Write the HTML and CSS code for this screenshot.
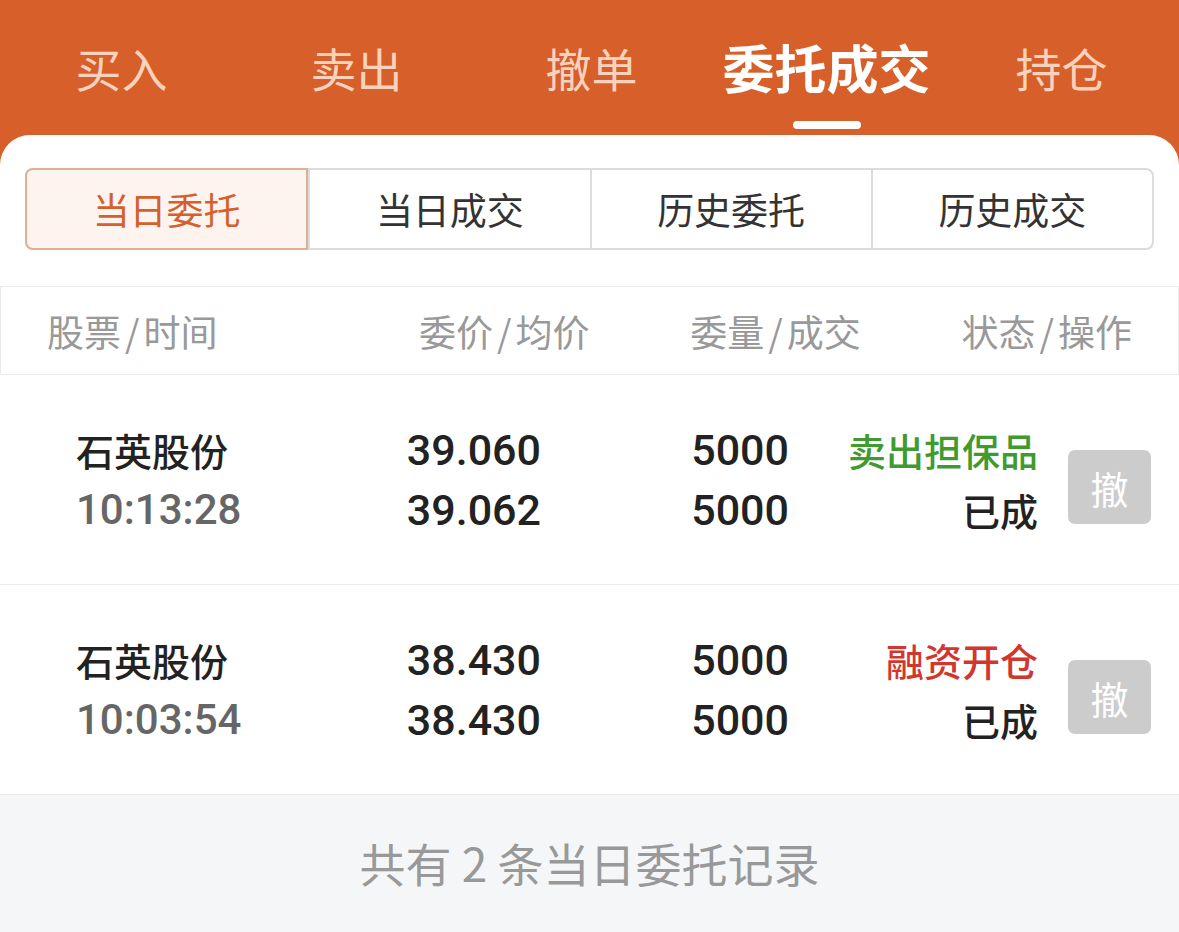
FILE: index.html
```html
<!DOCTYPE html>
<html lang="zh-CN">
<head>
<meta charset="utf-8">
<title>委托成交</title>
<link rel="stylesheet" href="styles.css">
</head>
<body>
<div class="app">
  <nav class="tabs">
    <div class="tab"><span class="tab-label">买入</span></div>
    <div class="tab"><span class="tab-label">卖出</span></div>
    <div class="tab"><span class="tab-label">撤单</span></div>
    <div class="tab active"><span class="tab-label">委托成交</span><span class="indicator"></span></div>
    <div class="tab"><span class="tab-label">持仓</span></div>
  </nav>
  <main class="panel">
    <div class="segments">
      <div class="seg selected">当日委托</div>
      <div class="seg">当日成交</div>
      <div class="seg">历史委托</div>
      <div class="seg">历史成交</div>
    </div>
    <div class="thead">
      <div class="th th-left">股票<span class="sep">/</span>时间</div>
      <div class="th">委价<span class="sep">/</span>均价</div>
      <div class="th">委量<span class="sep">/</span>成交</div>
      <div class="th">状态<span class="sep">/</span>操作</div>
    </div>
    <div class="row">
      <div class="cell cell-left"><span class="name">石英股份</span><span class="time">10:13:28</span></div>
      <div class="cell num"><span>39.060</span><span>39.062</span></div>
      <div class="cell num"><span>5000</span><span>5000</span></div>
      <div class="cell status"><span class="green">卖出担保品</span><span>已成</span></div>
      <div class="cell action"><button class="cancel">撤</button></div>
    </div>
    <div class="row">
      <div class="cell cell-left"><span class="name">石英股份</span><span class="time">10:03:54</span></div>
      <div class="cell num"><span>38.430</span><span>38.430</span></div>
      <div class="cell num"><span>5000</span><span>5000</span></div>
      <div class="cell status"><span class="red">融资开仓</span><span>已成</span></div>
      <div class="cell action"><button class="cancel">撤</button></div>
    </div>
    <footer class="summary">共有 2 条当日委托记录</footer>
  </main>
</div>
</body>
</html>
```
FILE: styles.css
```css
* { box-sizing: border-box; }
html, body { margin: 0; padding: 0; }
body {
  font-family: Roboto, "Noto Sans CJK SC", sans-serif;
  background: #f5f6f8;
}
.app {
  min-height: 100vh;
  display: flex;
  flex-direction: column;
  background: #d65f2a;
}
.tabs {
  display: grid;
  grid-template-columns: repeat(5, 1fr);
  height: 135px;
  padding-left: 4px;
}
.tab {
  display: flex;
  flex-direction: column;
  align-items: center;
  padding-top: 35px;
}
.tab-label {
  font-family: "Noto Sans CJK SC", sans-serif;
  font-size: 46px;
  line-height: 64px;
  color: #f8d2bd;
}
.tab.active .tab-label {
  font-size: 52px;
  font-weight: 700;
  color: #ffffff;
}
.indicator {
  margin-top: 22px;
  width: 68px;
  height: 8px;
  border-radius: 4px;
  background: #ffffff;
}
.panel {
  flex: 1;
  display: flex;
  flex-direction: column;
  background: #ffffff;
  border-radius: 30px 30px 0 0;
}
.segments {
  display: grid;
  grid-template-columns: repeat(4, 1fr);
  margin: 33px 25px 0;
  height: 82px;
  border: 2px solid #dcdcdc;
  border-radius: 8px;
}
.seg {
  display: flex;
  align-items: center;
  justify-content: center;
  font-family: "Noto Sans CJK SC", sans-serif;
  font-size: 37px;
  color: #333333;
  border-left: 2px solid #dcdcdc;
}
.seg:first-child { border-left: none; }
.seg.selected {
  margin: -2px 0 -2px -2px;
  background: #fef4ef;
  color: #d4602c;
  border: 2px solid #deae95;
  border-radius: 8px 0 0 8px;
}
.thead {
  display: grid;
  grid-template-columns: repeat(4, 1fr);
  margin-top: 36px;
  height: 89px;
  padding: 0 46px;
  border: 1px solid #ebebeb;
  align-items: center;
}
.th {
  font-family: "Noto Sans CJK SC", sans-serif;
  font-size: 37px;
  color: #999999;
  text-align: right;
}
.th-left { text-align: left; }
.sep { margin: 0 4px; }
.row {
  display: grid;
  grid-template-columns: 240px 225px 248px 249px 113px;
  padding: 45px 28px 44px 76px;
  border-bottom: 1px solid #ececec;
}
.cell {
  display: flex;
  flex-direction: column;
  line-height: 60px;
}
.cell-left { align-items: flex-start; }
.name {
  font-family: "Noto Sans CJK SC", sans-serif;
  font-size: 38px;
  font-weight: 500;
  color: #222222;
}
.time {
  font-size: 42px;
  font-weight: 500;
  color: #666666;
}
.num {
  align-items: flex-end;
  font-size: 43px;
  font-weight: 500;
  color: #222222;
}
.status {
  align-items: flex-end;
  font-family: "Noto Sans CJK SC", sans-serif;
  font-size: 38px;
  font-weight: 500;
  color: #222222;
}
.green { color: #3f9a2f; }
.red { color: #d2372f; }
.action {
  align-items: flex-end;
  justify-content: center;
  padding-top: 14px;
}
.cancel {
  width: 83px;
  height: 74px;
  border: none;
  border-radius: 7px;
  background: #cccccc;
  color: #ffffff;
  font-family: "Noto Sans CJK SC", sans-serif;
  font-size: 38px;
  padding: 0;
}
.summary {
  flex: 1;
  display: flex;
  justify-content: center;
  padding-top: 37px;
  background: #f5f6f8;
  font-family: "Noto Sans CJK SC", sans-serif;
  font-size: 46px;
  line-height: 60px;
  color: #999999;
}
```
